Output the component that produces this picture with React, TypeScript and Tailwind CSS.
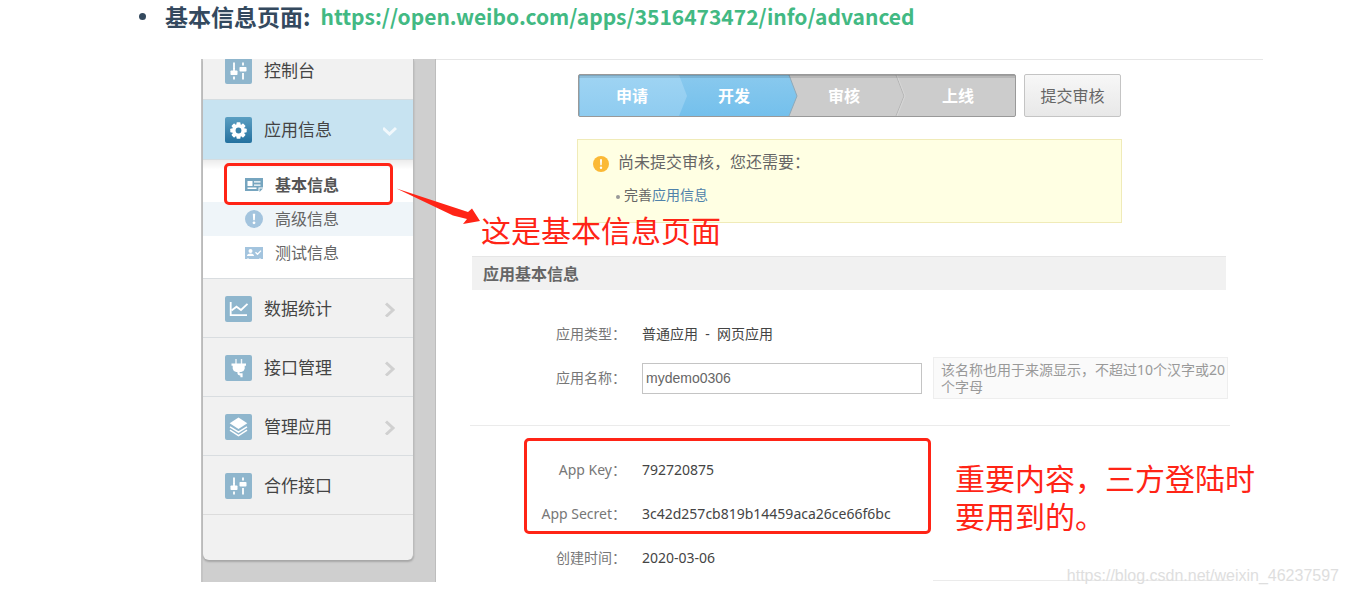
import type { ReactNode } from "react";

interface NavItem {
  label: string;
  icon: ReactNode;
  hasChildren: boolean;
}

function IconTile({ active = false, children }: { active?: boolean; children: ReactNode }) {
  return (
    <span
      className={`flex h-[26px] w-[27px] shrink-0 items-center justify-center rounded-xs ${
        active ? "bg-linear-to-b from-[#5b9fc2] to-[#23719f]" : "bg-[#8fb6cd]"
      }`}
    >
      {children}
    </span>
  );
}

function SlidersIcon() {
  return (
    <svg width="27" height="26" viewBox="0 0 27 26" fill="#fff">
      <rect x="8" y="4.5" width="2" height="6.5" opacity="0.9" />
      <rect x="8" y="18.5" width="2" height="3" opacity="0.9" />
      <rect x="17" y="4.5" width="2" height="3" opacity="0.9" />
      <rect x="17" y="15" width="2" height="6.5" opacity="0.9" />
      <rect x="8" y="10" width="2" height="3" opacity="0.9" />
      <rect x="5.5" y="12.5" width="7" height="4.5" rx="0.8" />
      <rect x="14.5" y="9" width="7" height="4.5" rx="0.8" />
    </svg>
  );
}

function GearIcon() {
  return (
    <svg width="27" height="26" viewBox="0 0 27 26">
      <g fill="#fff" transform="translate(13.5 13.5)">
        {[0, 45, 90, 135].map((angle) => (
          <rect key={angle} x="-2" y="-8.2" width="4" height="16.4" rx="0.8" transform={`rotate(${angle})`} />
        ))}
        <circle r="6.4" />
        <circle r="2.9" fill="#3b82aa" />
      </g>
    </svg>
  );
}

function ChartIcon() {
  return (
    <svg width="27" height="26" viewBox="0 0 27 26" fill="none" stroke="#fff">
      <path d="M5.7 6v13.2h16.3" strokeWidth="1.8" />
      <path d="M6.5 14.5l5-3.8 4.5 3.3 6.5-6.2" strokeWidth="1.8" />
    </svg>
  );
}

function PlugIcon() {
  return (
    <svg width="27" height="26" viewBox="0 0 27 26">
      <path d="M11 4v5M16.5 4v5" stroke="#fff" strokeWidth="1.4" opacity="0.85" />
      <path d="M6.5 8.5h14.5v2.2h-1.3v3q-.6 2.8-3.5 3.2h-5q-3-.4-3.5-3.2v-3H6.5z" fill="#fff" />
      <path d="M13.5 16v2.3q0 1 1.4 1.1h1.6v2.8" stroke="#fff" strokeWidth="2.2" fill="none" />
    </svg>
  );
}

function LayersIcon() {
  return (
    <svg width="27" height="26" viewBox="0 0 27 26">
      <path d="M13.5 3.5l8.8 5.7-8.8 5.8-8.8-5.8z" fill="#fff" />
      <path d="M5 12.8l8.5 5.4 8.5-5.4M5 16.2l8.5 5.4 8.5-5.4" stroke="#fff" strokeWidth="1.5" fill="none" />
    </svg>
  );
}

function Chevron({ down = false }: { down?: boolean }) {
  return (
    <svg
      className="ml-auto mr-4 shrink-0"
      width="14"
      height="16"
      viewBox="0 0 14 16"
      fill="none"
      strokeWidth="3"
      stroke={down ? "#f1f8fc" : "#d0d0d0"}
    >
      <path d={down ? "M0 6l6.5 6L13 6" : "M3 2.5L10 9l-7 6.5"} />
    </svg>
  );
}

function CardIcon() {
  return (
    <svg width="18" height="16" viewBox="0 0 18 16">
      <path d="M0 1h18v9.5h-4.5V14H0z" fill="#76a5bf" />
      <path d="M14.5 11.5H18L14.5 15z" fill="#76a5bf" />
      <path d="M2.5 4h5v5h-5zM9 4.2h6.5v1.4H9zM9 7.4h6.5v1.4H9zM2.5 10.6h9V12h-9z" fill="#fff" />
    </svg>
  );
}

function InfoIcon() {
  return (
    <svg width="18" height="18" viewBox="0 0 18 18">
      <circle cx="9" cy="9" r="9" fill="#a3c4de" />
      <path d="M7.8 3.8h2.4l-.4 6.4H8.2z" fill="#fff" />
      <circle cx="9" cy="12.8" r="1.4" fill="#fff" />
    </svg>
  );
}

function TestIcon() {
  return (
    <svg width="18" height="14" viewBox="0 0 18 14">
      <path d="M0 1h18v12h-2l-1-1-1 1H4l-1-1-1 1H0z" fill="#a3c4de" />
      <circle cx="5.5" cy="5" r="2" fill="#fff" />
      <path d="M2 10q0-2.6 3.5-2.6T9 10z" fill="#fff" />
      <path d="M10.5 6.2l2 2L16 4.6" stroke="#fff" strokeWidth="1.3" fill="none" />
    </svg>
  );
}

const SUB_ITEMS = [
  { label: "基本信息", icon: <CardIcon />, style: "font-bold text-[#555]" },
  { label: "高级信息", icon: <InfoIcon />, style: "bg-[#eff5f9] text-[#666]" },
  { label: "测试信息", icon: <TestIcon />, style: "text-[#666]" },
];

const NAV_ITEMS: NavItem[] = [
  { label: "数据统计", icon: <ChartIcon />, hasChildren: true },
  { label: "接口管理", icon: <PlugIcon />, hasChildren: true },
  { label: "管理应用", icon: <LayersIcon />, hasChildren: true },
  { label: "合作接口", icon: <SlidersIcon />, hasChildren: false },
];

function Sidebar() {
  return (
    <aside className="w-[235px] shrink-0 border-r border-l-2 border-r-[#bdbdbd] border-l-[#c4c4c4] bg-[#cfcfcf]">
      <nav className="w-[211px] overflow-hidden rounded-b-md border-r border-[#bbb] bg-[#f1f1f1] pb-[45px] text-[17px] text-[#444] shadow-[0_2px_2px_rgba(0,0,0,0.2)]">
        <a href="#console" className="flex h-10 items-start gap-3 pl-[22px]">
          <span className="-mt-px">
            <IconTile>
              <SlidersIcon />
            </IconTile>
          </span>
          <span className="leading-6">控制台</span>
        </a>
        <a
          href="#app"
          className="flex h-[61px] items-center gap-3 border-y border-[#d5dde1] bg-[#c7e3f1] pl-[22px]"
        >
          <IconTile active>
            <GearIcon />
          </IconTile>
          <span>应用信息</span>
          <Chevron down />
        </a>
        <div className="bg-white bg-linear-to-b from-[#ececec] from-0% to-white to-8% py-2 text-base">
          {SUB_ITEMS.map((item) => (
            <a
              key={item.label}
              href="#info"
              className={`flex h-[34px] items-center gap-3 pl-[42px] ${item.style}`}
            >
              {item.icon}
              <span>{item.label}</span>
            </a>
          ))}
        </div>
        {NAV_ITEMS.map((item) => (
          <a
            key={item.label}
            href="#nav"
            className="flex h-[59px] items-center gap-3 border-t border-[#d9dde0] pt-0.5 pl-[22px]"
          >
            <IconTile>{item.icon}</IconTile>
            <span>{item.label}</span>
            {item.hasChildren && <Chevron />}
          </a>
        ))}
        <div className="border-t border-[#dcdcdc]" />
      </nav>
    </aside>
  );
}

function StepBar() {
  return (
    <ol className="relative flex h-[43px] w-[438px] items-center overflow-hidden rounded-xs border border-[#999] bg-[#ccc] text-base font-bold text-white">
      <svg className="absolute inset-0 size-full" viewBox="0 0 436 41" preserveAspectRatio="none">
        <defs>
          <linearGradient id="done" x1="0" y1="0" x2="0" y2="1">
            <stop offset="0" stopColor="#9fd4f3" />
            <stop offset="1" stopColor="#8fccf0" />
          </linearGradient>
          <linearGradient id="current" x1="0" y1="0" x2="0" y2="1">
            <stop offset="0" stopColor="#89c9ee" />
            <stop offset="1" stopColor="#74c0ec" />
          </linearGradient>
        </defs>
        <path d="M0 0h210l8 21-8 20H0z" fill="url(#current)" />
        <path d="M0 0h100l8 21-8 20H0z" fill="url(#done)" />
        <path d="M210 0l8 21-8 20" fill="none" stroke="#8fa9b8" />
        <path d="M317 0l8 21-8 20" fill="none" stroke="#b5b5b5" />
        <path d="M318 0l8 21-8 20" fill="none" stroke="#d6d6d6" />
        <rect width="436" height="1" fill="#000" opacity="0.22" />
        <rect y="1" width="436" height="2" fill="#000" opacity="0.1" />
        <rect width="1" height="41" fill="#000" opacity="0.12" />
      </svg>
      <li className="relative w-[106px] text-center">申请</li>
      <li className="relative w-[98px] text-center">开发</li>
      <li className="relative w-[122px] text-center">审核</li>
      <li className="relative w-[106px] text-center">上线</li>
    </ol>
  );
}

function Notice() {
  return (
    <section className="ml-[141px] mt-[22px] h-[84px] w-[545px] border border-[#f0ebb8] bg-[#ffffe3] pl-[15px] text-[#666]">
      <div className="flex h-11 items-center gap-[9px] text-base">
        <svg className="mt-1" width="16" height="16" viewBox="0 0 16 16">
          <circle cx="8" cy="8" r="8" fill="#fbb936" />
          <path d="M7 3.2h2l-.3 6H7.3z" fill="#fff" />
          <circle cx="8" cy="11.8" r="1.2" fill="#fff" />
        </svg>
        <span>尚未提交审核，您还需要：</span>
      </div>
      <ul className="ml-[23px] text-sm leading-[22px]">
        <li className="flex items-center gap-1">
          <span className="mt-1 size-1 rounded-full bg-[#999]" />
          <span>
            完善
            <a href="#info" className="text-[#4f82aa]">
              应用信息
            </a>
          </span>
        </li>
      </ul>
    </section>
  );
}

function Row({ label, children }: { label: string; children: ReactNode }) {
  return (
    <div className="flex h-[44px] items-center gap-4">
      <dt className="w-[190px] text-right text-[#777]">{label}</dt>
      <dd className="text-[#444]">{children}</dd>
    </div>
  );
}

function AppInfo() {
  return (
    <main className="min-w-0 flex-1 border-t border-[#e6e6e6] bg-white pb-px text-sm">
      <div className="ml-[142px] mt-[14px] flex gap-2">
        <StepBar />
        <button className="h-[43px] w-[97px] rounded-xs border border-[#c4c4c4] bg-linear-to-b from-[#f7f7f7] to-[#e8e8e8] text-base text-[#666]">
          提交审核
        </button>
      </div>
      <Notice />
      <h2 className="ml-9 mr-[37px] mt-[33px] h-[34px] border-t border-[#e6e6e6] bg-[#f1f1f1] pl-[11px] text-base leading-[34px] font-bold text-[#666]">
        应用基本信息
      </h2>
      <dl className="mt-[22px]">
        <Row label="应用类型：">普通应用&nbsp; -&nbsp; 网页应用</Row>
        <div className="flex h-[44px] items-center gap-4">
          <dt className="w-[190px] text-right text-[#777]">
            <label htmlFor="app-name">应用名称：</label>
          </dt>
          <dd className="flex items-center gap-[11px]">
            <input
              id="app-name"
              defaultValue="mydemo0306"
              className="h-[31px] w-[280px] border border-[#c4c4c4] px-[3px] font-['Liberation_Sans',sans-serif] text-sm text-[#666]"
            />
            <p className="w-[295px] border border-[#eee] bg-[#fafafa] py-[3px] pl-[7px] leading-[17px] text-[#999]">
              该名称也用于来源显示，不超过10个汉字或20个字母
            </p>
          </dd>
        </div>
      </dl>
      <hr className="ml-[34px] mr-[33px] mt-[25px] border-[#ebebeb]" />
      <dl className="mt-[22px]">
        <Row label="App Key：">792720875</Row>
        <Row label="App Secret：">3c42d257cb819b14459aca26ce66f6bc</Row>
        <Row label="创建时间：">2020-03-06</Row>
      </dl>
      <hr className="ml-[497px] mr-[33px] border-[#ebebeb]" />
    </main>
  );
}

// Red marks and notes drawn over the console
function Annotations() {
  return (
    <div className="pointer-events-none absolute inset-0 text-[30px] text-[#ff2416]">
      <div className="absolute left-[23px] top-[104px] h-[42px] w-[169px] rounded-[5px] border-[3px] border-[#ff2416]" />
      <svg className="absolute left-[194px] top-[128px]" width="86" height="38" viewBox="0 0 86 38">
        <path d="M1.5 1.5L3 2L73 25L77 21.5L85 34L68 37L72 32L58 28.5Z" fill="#ff2416" />
      </svg>
      <p className="absolute left-[280px] top-[152px] leading-10 whitespace-nowrap">这是基本信息页面</p>
      <div className="absolute left-[323px] top-[379px] h-[96px] w-[407px] rounded-[5px] border-[3px] border-[#ff2416]" />
      <p className="absolute left-[754px] top-[401px] leading-[38px] whitespace-nowrap">
        重要内容，三方登陆时
        <br />
        要用到的。
      </p>
    </div>
  );
}

export default function App() {
  return (
    <div className="relative min-h-screen overflow-x-auto bg-white font-['Noto_Sans','Noto_Sans_CJK_SC',sans-serif]">
      <ul className="flex h-[59px] items-start pl-[139px] font-['Noto_Sans_CJK_SC',sans-serif] text-[23px] leading-8 text-[#34495e]">
        <li className="flex items-center font-bold">
          <span className="mr-[19px] size-[7px] rounded-full bg-[#34495e]" />
          <span className="mr-2.5">基本信息页面:</span>
          <a
            href="https://open.weibo.com/apps/3516473472/info/advanced"
            className="text-[21px] font-semibold text-[#42b983]"
          >
            https://open.weibo.com/apps/3516473472/info/advanced
          </a>
        </li>
      </ul>
      <div className="relative ml-[201px] mr-[86px] flex">
        <Sidebar />
        <AppInfo />
        <Annotations />
      </div>
      <span className="absolute right-2.5 bottom-1.5 font-['Liberation_Sans',sans-serif] text-base text-[#dedede]">
        https://blog.csdn.net/weixin_46237597
      </span>
    </div>
  );
}
